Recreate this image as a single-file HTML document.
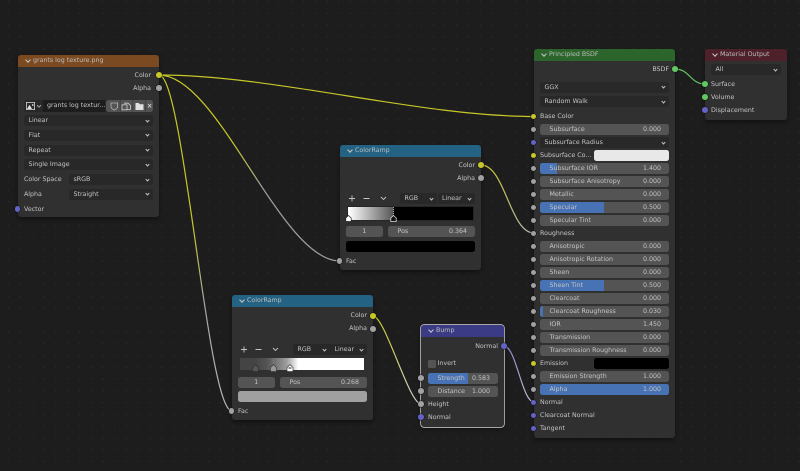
<!DOCTYPE html>
<html><head><meta charset="utf-8">
<style>
html,body{margin:0;padding:0}
body{width:800px;height:471px;overflow:hidden;position:relative;background-color:#1d1d1d;font-family:"DejaVu Sans","Liberation Sans",sans-serif;font-size:6.3px;color:#c4c4c4;text-rendering:geometricPrecision}
#dots{position:absolute;left:0;top:0;width:800px;height:471px;background-image:radial-gradient(circle at 1px 1px,#272727 .7px,transparent 1px);background-size:11.8px 11.8px;background-position:7.5px .5px}
#all{position:absolute;left:0;top:0;width:800px;height:471px;filter:blur(.35px)}
.n{position:absolute;background:#303030;border-radius:3px;box-shadow:0 2px 5px rgba(0,0,0,.45)}
.h{position:absolute;left:0;right:0;top:0;height:11.5px;border-radius:3px 3px 0 0;line-height:12px;padding-left:15px;box-sizing:border-box;color:#bcbcbc;white-space:nowrap}
.h::before{content:"";position:absolute;left:7.5px;top:2.8px;width:3px;height:3px;border:solid #c8c8c8;border-width:0 .8px .8px 0;transform:rotate(45deg)}
.t,.f,.d,.s,.b,.x{position:absolute}
.t{white-space:nowrap;height:11px;line-height:12px}
.r{text-align:right}
.f{height:11px;background:#545454;border-radius:2.5px;overflow:hidden;line-height:12px;white-space:nowrap}
.f i{position:absolute;left:0;top:0;height:11px;background:#4772b3}
.f span{position:absolute;left:9.5px;top:0}
.f b{position:absolute;right:8px;top:0;font-weight:normal}
.d{height:11px;background:#282828;border-radius:2.5px;line-height:12px;white-space:nowrap;padding-left:4.5px;box-sizing:border-box}
.d::after{content:"";position:absolute;right:4px;top:3.6px;width:2px;height:2px;border:solid #c0c0c0;border-width:0 .8px .8px 0;transform:rotate(45deg)}
.s{width:5.6px;height:5.6px;border-radius:50%;background:#a1a1a1;margin:-2.8px 0 0 -2.8px;box-shadow:0 0 0 .5px #111}
.y{background:#c7c729}.p{background:#6363c7}.g{background:#63c763}
.b{background:#000}
</style></head><body>
<div id="dots"></div>
<div id="all">

<!-- image node -->
<div class="n" style="left:18px;top:55px;width:141px;height:162px"><div class="h" style="background:#7c4a20">grants log texture.png</div></div>
<div class="t r" style="left:100px;width:51px;top:69.5px">Color</div>
<div class="t r" style="left:100px;width:51px;top:82.5px">Alpha</div>
<div class="x" style="left:24px;top:100px;width:129px;height:11.5px;background:#282828;border-radius:2.5px"></div>
<div class="x" style="left:26px;top:102px;width:9px;height:8px;background:#d0d0d0"></div>
<svg class="x" style="left:26px;top:102px" width="9" height="8"><rect x="0.8" y="0.8" width="7.4" height="6.4" fill="#2b2b2b"/><path d="M1 7L3.5 2.8 6 7ZM6 2.2h1.5v1.5H6z" fill="#e0e0e0"/></svg>
<svg class="x" style="left:36px;top:103.5px" width="6" height="5"><path d="M1 1.2L3 3.2 5 1.2" fill="none" stroke="#c0c0c0" stroke-width=".8"/></svg>
<div class="x" style="left:43px;top:100px;width:62px;height:11.5px;background:#1d1d1d"></div>
<div class="t" style="left:47px;top:100.2px">grants log textur...</div>
<div class="x" style="left:106px;top:100px;width:47px;height:11.5px;background:#545454;border-radius:2.5px"></div>
<svg class="x" style="left:106px;top:100px" width="47" height="11.5">
<path d="M5 3h6.6v3.5c0 2-2 3-3.3 3.5C7 9.500 5 8.500 5 6.500z" fill="none" stroke="#b5b5b5" stroke-width=".8"/>
<path d="M18 3.200h4l2.500 2.200v4h-4" fill="none" stroke="#d0d0d0" stroke-width=".8"/><rect x="16" y="4.800" width="5" height="5" fill="none" stroke="#d0d0d0" stroke-width=".8"/>
<path d="M29.500 3h3.200l1 1.200h3.800v5.800h-8z" fill="#e0e0e0"/>
<path d="M42 4l3.200 3.500M45.200 4L42 7.500" stroke="#d0d0d0" stroke-width=".9"/>
<path d="M14.200 0v11.500M26.800 0v11.500M39.500 0v11.500" stroke="#3a3a3a" stroke-width=".7"/></svg>
<div class="d" style="left:24px;top:115px;width:129px">Linear</div>
<div class="d" style="left:24px;top:129.700px;width:129px">Flat</div>
<div class="d" style="left:24px;top:144.500px;width:129px">Repeat</div>
<div class="d" style="left:24px;top:159.300px;width:129px">Single Image</div>
<div class="t" style="left:24px;top:174px">Color Space</div>
<div class="d" style="left:69px;top:174px;width:84px">sRGB</div>
<div class="t" style="left:24px;top:188.800px">Alpha</div>
<div class="d" style="left:69px;top:188.800px;width:84px">Straight</div>
<div class="t" style="left:24px;top:203.500px">Vector</div>

<!-- ramp 1 -->
<div class="n" style="left:340px;top:145px;width:141px;height:125px"><div class="h" style="background:#246283">ColorRamp</div></div>
<div class="t r" style="left:420px;width:55px;top:159.500px">Color</div>
<div class="t r" style="left:420px;width:55px;top:172.500px">Alpha</div>
<svg class="x" style="left:346px;top:193px" width="50" height="11"><path d="M3 5.500h6M6 2.500v6M17.500 5.500h6M35 4l2.500 2.500L40 4" fill="none" stroke="#c4c4c4" stroke-width=".9"/></svg>
<div class="d" style="left:400px;top:193px;width:37px;border-radius:2.500px 0 0 2.500px;padding-left:4.500px">RGB</div>
<div class="d" style="left:437.500px;top:193px;width:37.500px;border-radius:0 2.500px 2.500px 0;padding-left:4.500px">Linear</div>
<div class="x" style="left:348px;top:207px;width:125px;height:12.500px;background:linear-gradient(90deg,#fff 0,#fff 1%,#555 36.400%,#000 36.400%,#000 100%);box-shadow:0 0 0 .5px #1a1a1a"></div>
<svg class="x" style="left:345px;top:205px" width="60" height="18"><path d="M3.500 5v5" stroke="#fff" stroke-dasharray="1 1" stroke-width=".7"/><path d="M.8 16.500v-3.500l2.700-2.500 2.700 2.500v3.500z" fill="#fff" stroke="#222" stroke-width=".7"/><path d="M48.500 2v9" stroke="#ddd" stroke-dasharray="1 1" stroke-width=".7"/><path d="M45.800 16.500v-3.500l2.700-2.500 2.700 2.500v3.500z" fill="#111" stroke="#ddd" stroke-width=".8"/></svg>
<div class="f" style="left:346px;top:226px;width:36.500px;text-align:center">1</div>
<div class="f" style="left:388px;top:226px;width:87px"><span style="left:9.500px">Pos</span><b style="right:8px">0.364</b></div>
<div class="x" style="left:346px;top:241px;width:129px;height:11px;background:#000;border-radius:2.500px"></div>
<div class="t" style="left:346px;top:255.500px">Fac</div>

<!-- ramp 2 -->
<div class="n" style="left:232px;top:295px;width:141px;height:125px"><div class="h" style="background:#246283">ColorRamp</div></div>
<div class="t r" style="left:312px;width:55px;top:310px">Color</div>
<div class="t r" style="left:312px;width:55px;top:323px">Alpha</div>
<svg class="x" style="left:238px;top:344px" width="50" height="11"><path d="M3 5.500h6M6 2.500v6M17.500 5.500h6M35 4l2.500 2.500L40 4" fill="none" stroke="#c4c4c4" stroke-width=".9"/></svg>
<div class="d" style="left:293px;top:344px;width:36.500px;border-radius:2.500px 0 0 2.500px;padding-left:4.500px">RGB</div>
<div class="d" style="left:330px;top:344px;width:37px;border-radius:0 2.500px 2.500px 0;padding-left:4.500px">Linear</div>
<div class="x" style="left:240px;top:358px;width:124px;height:12px;background:linear-gradient(90deg,#444 0,#444 12%,#555 22%,#a0a0a0 38%,#fff 47%,#fff 100%)"></div>
<svg class="x" style="left:250px;top:358px" width="50" height="15"><path d="M2.500 13.500v-4l3-2.800 3 2.800v4z" fill="#555" stroke="#2a2a2a" stroke-width=".6"/><path d="M20.500 13.500v-4l3-2.800 3 2.800v4z" fill="#999" stroke="#333" stroke-width=".6"/><path d="M37 13.500v-4l3-2.800 3 2.800v4z" fill="#fff" stroke="#222" stroke-width=".6"/><path d="M38.500 10h3" stroke="#222" stroke-width="1"/><path d="M23.500 0v6" stroke="#888" stroke-dasharray="1 1" stroke-width=".7"/></svg>
<div class="f" style="left:238px;top:377px;width:36.500px;text-align:center">1</div>
<div class="f" style="left:280px;top:377px;width:87px"><span>Pos</span><b>0.268</b></div>
<div class="x" style="left:238px;top:391px;width:129px;height:11px;background:#a0a0a0;border-radius:2.500px"></div>
<div class="t" style="left:238px;top:405.500px">Fac</div>

<!-- bump -->
<div class="n" style="left:421px;top:325px;width:83px;height:102px;box-shadow:0 0 0 .7px #d8d8d8,0 2px 5px rgba(0,0,0,.45)"><div class="h" style="background:#3b3b85">Bump</div></div>
<div class="t r" style="left:450px;width:48px;top:340.500px">Normal</div>
<div class="x" style="left:427.500px;top:359.500px;width:8.500px;height:8px;background:#545454;border-radius:1.500px"></div>
<div class="t" style="left:437.500px;top:358px">Invert</div>
<div class="f" style="left:428px;top:373px;width:70px"><i style="width:40px"></i><span>Strength</span><b style="right:8px">0.583</b></div>
<div class="f" style="left:428px;top:386px;width:70px"><span>Distance</span><b style="right:8px">1.000</b></div>
<div class="t" style="left:428px;top:398.500px">Height</div>
<div class="t" style="left:428px;top:411.500px">Normal</div>

<!-- principled -->
<div class="n" style="left:534px;top:49px;width:141px;height:389px"><div class="h" style="background:#2b652b">Principled BSDF</div></div>
<div class="t r" style="left:620px;width:49px;top:63.500px">BSDF</div>
<div class="d" style="left:540px;top:81.500px;width:129px">GGX</div>
<div class="d" style="left:540px;top:96px;width:129px">Random Walk</div>
<div class="t" style="left:540px;top:111px">Base Color</div>
<div class="f" style="left:540px;top:124px;width:129px"><span>Subsurface</span><b>0.000</b></div>
<div class="d" style="left:540px;top:137px;width:129px">Subsurface Radius</div>
<div class="t" style="left:540px;top:150px">Subsurface Co...</div>
<div class="x" style="left:594px;top:150px;width:75px;height:11px;background:#e8e8e8;border-radius:2.500px"></div>
<div class="f" style="left:540px;top:163px;width:129px"><i style="width:17px"></i><span>Subsurface IOR</span><b>1.400</b></div>
<div class="f" style="left:540px;top:176px;width:129px"><span>Subsurface Anisotropy</span><b>0.000</b></div>
<div class="f" style="left:540px;top:189px;width:129px"><span>Metallic</span><b>0.000</b></div>
<div class="f" style="left:540px;top:202px;width:129px"><i style="width:64px"></i><span>Specular</span><b>0.500</b></div>
<div class="f" style="left:540px;top:215px;width:129px"><span>Specular Tint</span><b>0.000</b></div>
<div class="t" style="left:540px;top:228px">Roughness</div>
<div class="f" style="left:540px;top:241px;width:129px"><span>Anisotropic</span><b>0.000</b></div>
<div class="f" style="left:540px;top:254px;width:129px"><span>Anisotropic Rotation</span><b>0.000</b></div>
<div class="f" style="left:540px;top:267px;width:129px"><span>Sheen</span><b>0.000</b></div>
<div class="f" style="left:540px;top:280px;width:129px"><i style="width:64px"></i><span>Sheen Tint</span><b>0.500</b></div>
<div class="f" style="left:540px;top:293px;width:129px"><span>Clearcoat</span><b>0.000</b></div>
<div class="f" style="left:540px;top:306px;width:129px"><i style="width:3px"></i><span>Clearcoat Roughness</span><b>0.030</b></div>
<div class="f" style="left:540px;top:319px;width:129px"><span>IOR</span><b>1.450</b></div>
<div class="f" style="left:540px;top:332px;width:129px"><span>Transmission</span><b>0.000</b></div>
<div class="f" style="left:540px;top:345px;width:129px"><span>Transmission Roughness</span><b>0.000</b></div>
<div class="t" style="left:540px;top:358px">Emission</div>
<div class="x" style="left:594px;top:358px;width:75px;height:11px;background:#000;border-radius:2.500px"></div>
<div class="f" style="left:540px;top:371px;width:129px"><span>Emission Strength</span><b>1.000</b></div>
<div class="f" style="left:540px;top:384px;width:129px"><i style="width:129px"></i><span>Alpha</span><b>1.000</b></div>
<div class="t" style="left:540px;top:397px">Normal</div>
<div class="t" style="left:540px;top:410px">Clearcoat Normal</div>
<div class="t" style="left:540px;top:423px">Tangent</div>

<!-- material output -->
<div class="n" style="left:705px;top:49px;width:82px;height:71px"><div class="h" style="background:#4e2029">Material Output</div></div>
<div class="d" style="left:711px;top:64px;width:70px">All</div>
<div class="t" style="left:711px;top:78.500px">Surface</div>
<div class="t" style="left:711px;top:91.500px">Volume</div>
<div class="t" style="left:711px;top:104.500px">Displacement</div>

<!-- links -->
<svg class="x" style="left:0;top:0" width="800" height="471" fill="none" stroke-width="1.200">
<defs>
<linearGradient id="a" gradientUnits="userSpaceOnUse" x1="159" y1="75" x2="340" y2="261"><stop offset="0" stop-color="#c7c729"/><stop offset=".38" stop-color="#c7c729"/><stop offset=".6" stop-color="#a0a0a0"/><stop offset="1" stop-color="#a0a0a0"/></linearGradient>
<linearGradient id="c" gradientUnits="userSpaceOnUse" x1="159" y1="75" x2="232" y2="411"><stop offset="0" stop-color="#c7c729"/><stop offset=".45" stop-color="#c7c729"/><stop offset=".68" stop-color="#a8a8a8"/><stop offset="1" stop-color="#b8b8b8"/></linearGradient>
<linearGradient id="d" gradientUnits="userSpaceOnUse" x1="481" y1="165" x2="534" y2="233"><stop offset="0" stop-color="#c7c729"/><stop offset="1" stop-color="#b5b5b5"/></linearGradient>
<linearGradient id="e" gradientUnits="userSpaceOnUse" x1="373" y1="316" x2="421" y2="404"><stop offset="0" stop-color="#c7c729"/><stop offset="1" stop-color="#d0d0d0"/></linearGradient>
<linearGradient id="f" gradientUnits="userSpaceOnUse" x1="504" y1="346" x2="534" y2="402"><stop offset="0" stop-color="#8585d0"/><stop offset="1" stop-color="#c0c0d0"/></linearGradient>
</defs>
<path d="M159 75C274 75 419 116.500 534 116.500" stroke="#c7c729"/>
<path d="M159 75C219 75 280 261 340 261" stroke="url(#a)"/>
<path d="M159 75C184 75 207 411 232 411" stroke="url(#c)"/>
<path d="M481 165C505 165 510 233 534 233" stroke="url(#d)"/>
<path d="M373 316C385 316 409 404 421 404" stroke="url(#e)"/>
<path d="M504 346C516 346 522 402 534 402" stroke="url(#f)"/>
<path d="M675 69C690 69 690 84 705 84" stroke="#63c763"/>
</svg>

<!-- sockets -->
<div class="s y" style="left:159px;top:75px"></div>
<div class="s" style="left:159px;top:88px"></div>
<div class="s p" style="left:17.500px;top:209px"></div>
<div class="s y" style="left:481px;top:165px"></div>
<div class="s" style="left:481px;top:178px"></div>
<div class="s" style="left:339.500px;top:261px"></div>
<div class="s y" style="left:373px;top:316px"></div>
<div class="s" style="left:373px;top:329px"></div>
<div class="s" style="left:231.500px;top:411px"></div>
<div class="s p" style="left:504px;top:346px"></div>
<div class="s" style="left:421px;top:378px"></div>
<div class="s" style="left:421px;top:391px"></div>
<div class="s" style="left:421px;top:404px"></div>
<div class="s p" style="left:421px;top:417px"></div>
<div class="s g" style="left:675px;top:69px"></div>
<div class="s y" style="left:533.500px;top:116.500px"></div>
<div class="s" style="left:533.500px;top:129.500px"></div>
<div class="s p" style="left:533.500px;top:142.500px"></div>
<div class="s y" style="left:533.500px;top:155.500px"></div>
<div class="s" style="left:533.500px;top:168.500px"></div>
<div class="s" style="left:533.500px;top:181.500px"></div>
<div class="s" style="left:533.500px;top:194.500px"></div>
<div class="s" style="left:533.500px;top:207.500px"></div>
<div class="s" style="left:533.500px;top:220.500px"></div>
<div class="s" style="left:533.500px;top:233.500px"></div>
<div class="s" style="left:533.500px;top:246.500px"></div>
<div class="s" style="left:533.500px;top:259.500px"></div>
<div class="s" style="left:533.500px;top:272.500px"></div>
<div class="s" style="left:533.500px;top:285.500px"></div>
<div class="s" style="left:533.500px;top:298.500px"></div>
<div class="s" style="left:533.500px;top:311.500px"></div>
<div class="s" style="left:533.500px;top:324.500px"></div>
<div class="s" style="left:533.500px;top:337.500px"></div>
<div class="s" style="left:533.500px;top:350.500px"></div>
<div class="s y" style="left:533.500px;top:363.500px"></div>
<div class="s" style="left:533.500px;top:376.500px"></div>
<div class="s" style="left:533.500px;top:389.500px"></div>
<div class="s p" style="left:533.500px;top:402.500px"></div>
<div class="s p" style="left:533.500px;top:415.500px"></div>
<div class="s p" style="left:533.500px;top:428.500px"></div>
<div class="s g" style="left:705px;top:84px"></div>
<div class="s g" style="left:705px;top:97px"></div>
<div class="s p" style="left:705px;top:110px"></div>
</div>
</body></html>
